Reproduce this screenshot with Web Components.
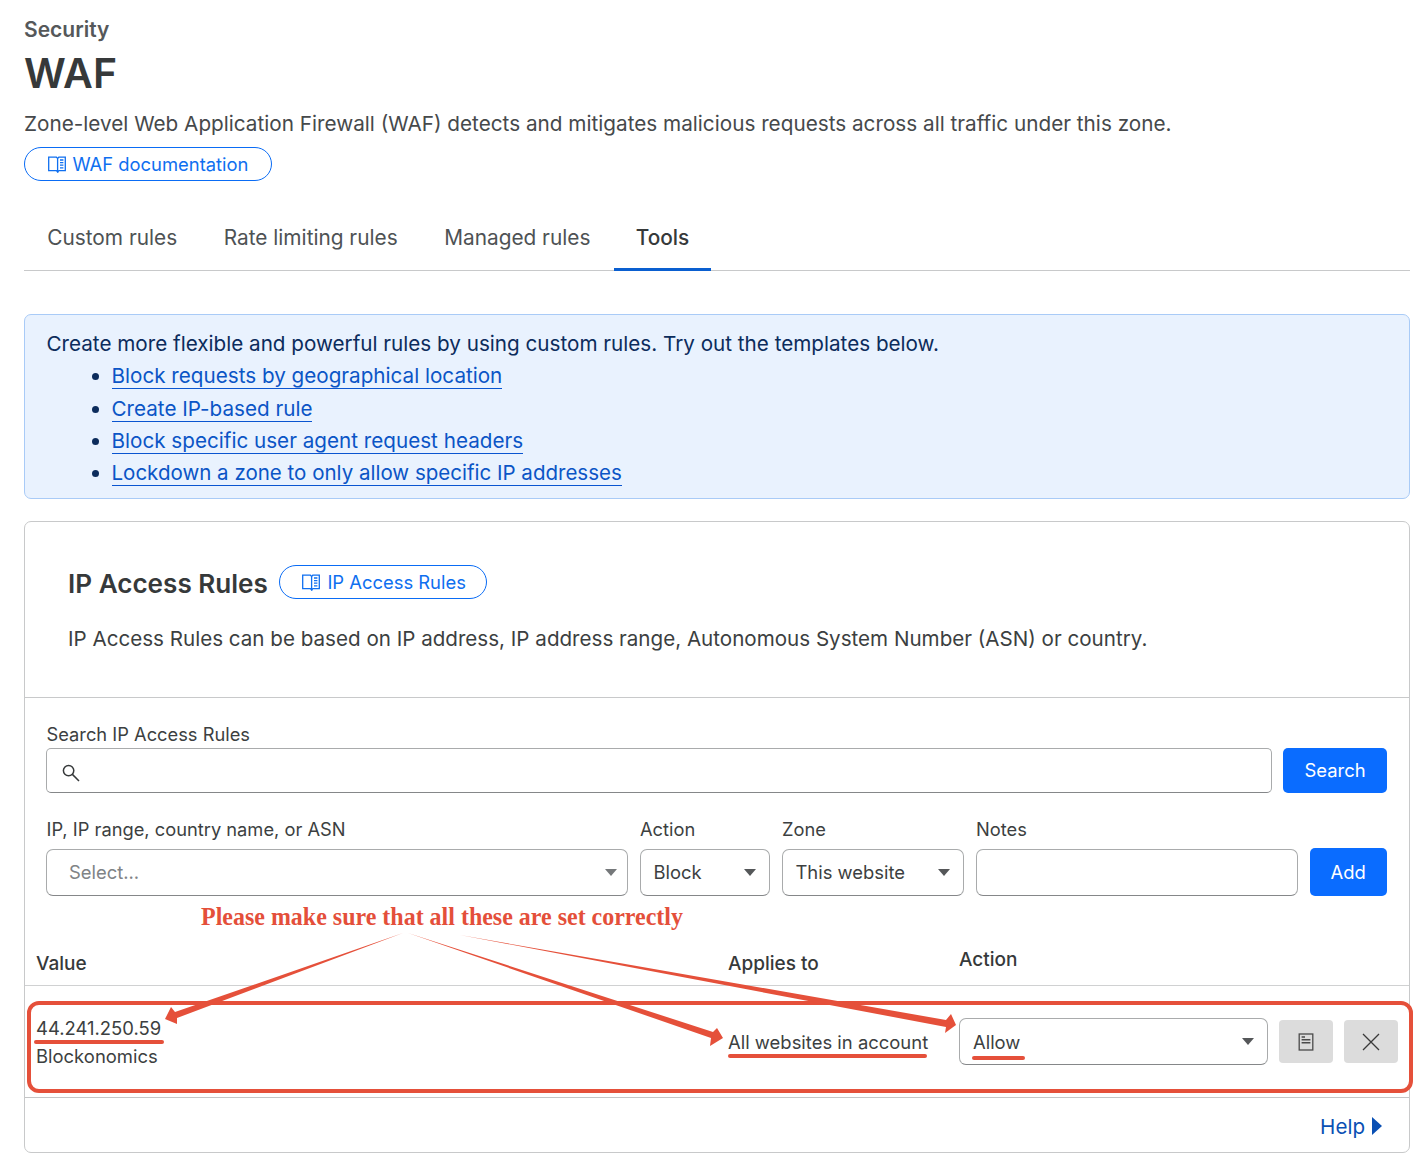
<!DOCTYPE html>
<html>
<head>
<meta charset="utf-8">
<title>WAF</title>
<style>
html, body { margin: 0; padding: 0; background: #fff; }
body { font-family: Inter, "Liberation Sans", sans-serif; color: #36393a; }
</style>
</head>
<body>
<waf-page></waf-page>

<script>
//#region ICONS
const bookIcon = /* html */ `
<svg width="18" height="17" viewBox="0 0 18 17" fill="none" stroke="currentColor" stroke-width="1.3">
	<path d="M.7 1.2h7.7l1.2 1.2V16l-1.2-1.4H.7z"/>
	<path d="M9.6 2.4l1.2-1.2h6.5v13.4h-6.5L9.6 16"/>
	<path d="M12 4h3.4M12 6.6h3.4M12 9.2h3.4M12 11.8h3.4"/>
</svg>`;
//#endregion ICONS

//#region DOC LINK
customElements.define("doc-link", class extends HTMLElement {
	constructor() {
		super();
		this.attachShadow({mode: "open"}).innerHTML = /* html */ `
		<style>
		:host {
			display: inline-flex;
			align-items: center;
			box-sizing: border-box;
			height: 34px;
			padding: 0 21px 0 22.5px;
			gap: 7px;
			border: 1.5px solid #0a6cf5;
			border-radius: 17px;
			color: #0f6ff0;
			font-size: 18.4px;
			line-height: 1;
		}
		svg { flex: none; }
		</style>
		${bookIcon}<slot></slot>`;
	}
});
//#endregion DOC LINK

//#region TABS
customElements.define("tab-bar", class extends HTMLElement {
	constructor() {
		super();
		this.attachShadow({mode: "open"}).innerHTML = /* html */ `
		<style>
		:host {
			display: flex;
			height: 70px;
			border-bottom: 1px solid #c8c9ca;
		}
		</style>
		<slot></slot>`;
	}
});

customElements.define("tab-item", class extends HTMLElement {
	constructor() {
		super();
		this.attachShadow({mode: "open"}).innerHTML = /* html */ `
		<style>
		:host {
			display: flex;
			align-items: center;
			box-sizing: border-box;
			height: 71px;
			padding: 3px 23.3px 0;
			font-size: 20.8px;
			color: #4e5254;
		}
		:host([active]) {
			color: #36393a;
			font-weight: 500;
			border-bottom: 3px solid #0a5fd0;
			padding: 6px 21.5px 0 22px;
		}
		</style>
		<slot></slot>`;
	}
});
//#endregion TABS

//#region NOTICE
customElements.define("info-banner", class extends HTMLElement {
	constructor() {
		super();
		this.attachShadow({mode: "open"}).innerHTML = /* html */ `
		<style>
		:host {
			display: block;
			box-sizing: border-box;
			height: 185px;
			margin-top: 43px;
			padding: 13px 21.5px 0;
			background: #e9f2fe;
			border: 1px solid #a9cbf7;
			border-radius: 7px;
			color: #0c2c5c;
			font-size: 20.66px;
			line-height: 32.3px;
		}
		ul { margin: 0; padding: 0 0 0 65px; }
		li:last-child { font-size: 20.52px; }
		a {
			color: #0b55c6;
			text-decoration: none;
			border-bottom: 1.5px solid #0a55d0;
		}
		</style>
		Create more flexible and powerful rules by using custom rules. Try out the templates below.
		<ul>
			<li><a>Block requests by geographical location</a></li>
			<li><a>Create IP-based rule</a></li>
			<li><a>Block specific user agent request headers</a></li>
			<li><a>Lockdown a zone to only allow specific IP addresses</a></li>
		</ul>`;
	}
});
//#endregion NOTICE

//#region FORM PARTS
customElements.define("field-box", class extends HTMLElement {
	constructor() {
		super();
		this.attachShadow({mode: "open"}).innerHTML = /* html */ `
		<style>
		:host {
			display: flex;
			flex-direction: column;
			min-width: 0;
			font-size: 18.3px;
			color: #3c3f41;
		}
		label {
			display: block;
			flex: none;
			height: var(--label-height, 27px);
			padding-left: .5px;
			line-height: 27px;
			white-space: nowrap;
		}
		::slotted(*) { flex: none; }
		</style>
		<label><slot name="label"></slot></label>
		<slot></slot>`;
	}
});

customElements.define("select-box", class extends HTMLElement {
	constructor() {
		super();
		this.attachShadow({mode: "open"}).innerHTML = /* html */ `
		<style>
		:host {
			display: flex;
			align-items: center;
			justify-content: space-between;
			box-sizing: border-box;
			height: 47px;
			padding: 0 13px;
			background: #fff;
			border: 1px solid #a9abac;
			border-bottom-color: #858789;
			border-radius: 7px;
			font-size: 18.4px;
			color: #3c3f41;
		}
		:host([placeholder]) { padding: 0 10px 0 22px; color: #808386; }
		:host([placeholder]) i { border-top-color: #75787a; }
		span { margin-top: var(--text-shift, -2px); }
		i {
			width: 0;
			height: 0;
			border-left: 6.5px solid transparent;
			border-right: 6.5px solid transparent;
			border-top: 7.5px solid #555759;
		}
		</style>
		<span><slot></slot></span><i></i>`;
	}
});

customElements.define("blue-button", class extends HTMLElement {
	constructor() {
		super();
		this.attachShadow({mode: "open"}).innerHTML = /* html */ `
		<style>
		:host {
			display: flex;
			align-items: center;
			justify-content: center;
			flex: none;
			box-sizing: border-box;
			background: #0a6cff;
			color: #fff;
			border-radius: 5px;
			font-size: 18.45px;
		}
		</style>
		<slot></slot>`;
	}
});

customElements.define("icon-button", class extends HTMLElement {
	constructor() {
		super();
		this.attachShadow({mode: "open"}).innerHTML = /* html */ `
		<style>
		:host {
			display: flex;
			align-items: center;
			justify-content: center;
			width: 54px;
			height: 43px;
			background: #dcdcdc;
			border-radius: 4px;
		}
		</style>
		<slot></slot>`;
	}
});
//#endregion FORM PARTS

//#region ANNOTATIONS
customElements.define("red-notes", class extends HTMLElement {
	constructor() {
		super();
		this.attachShadow({mode: "open"}).innerHTML = /* html */ `
		<style>
		:host {
			position: absolute;
			left: 0;
			top: 0;
			width: 1428px;
			height: 1169px;
			pointer-events: none;
		}
		svg { display: block; }
		text {
			font-family: "Liberation Serif", serif;
			font-weight: 700;
			font-size: 24.5px;
			fill: #e44f3a;
		}
		</style>
		<svg width="1428" height="1169" viewBox="0 0 1428 1169" fill="#e5503a">
			<text x="201" y="925" textLength="482" lengthAdjust="spacingAndGlyphs">Please make sure that all these are set correctly</text>
			<rect x="29" y="1003" width="1382" height="88" rx="10" fill="none" stroke="#e5503a" stroke-width="4"/>
			<!-- arrows -->
			<path d="M403 933L175 1012L171 1007L165 1019L177 1024L177 1018Z"/>
			<path d="M408 933L713 1032L717 1028L723 1038L710 1046L711 1038Z"/>
			<path d="M460 935L946 1020L951 1014L956 1025L945 1033L946 1027Z"/>
			<!-- underlines -->
			<rect x="34" y="1040" width="130" height="4" rx="2"/>
			<rect x="728" y="1054" width="199" height="4" rx="2"/>
			<rect x="972" y="1056" width="53" height="4" rx="2"/>
		</svg>`;
	}
});
//#endregion ANNOTATIONS

//#region PAGE
customElements.define("waf-page", class extends HTMLElement {
	constructor() {
		super();
		this.attachShadow({mode: "open"}).innerHTML = /* html */ `
		<style>
		:host {
			display: block;
			position: relative;
			box-sizing: border-box;
			width: 1428px;
			height: 1169px;
			padding: 0 18px 0 24px;
			overflow: hidden;
		}
		.crumb { padding-top: 17px; font-size: 21px; line-height: 26px; font-weight: 600; color: #55585a; }
		h1 { margin: 0; font-size: 41px; line-height: 50px; font-weight: 600; color: #36393a; padding-top: 5px; }
		.lead { margin-top: 13px; font-size: 20.73px; line-height: 26px; color: #46494b; }
		.lead-link { margin-top: 10px; }
		.tabs-wrap { margin-top: 19px; }
		.card {
			box-sizing: border-box;
			height: 632px;
			margin-top: 22px;
			border: 1px solid #c8c9ca;
			border-radius: 7px;
			display: flex;
			flex-direction: column;
		}
		.card-head {
			height: 176px;
			box-sizing: border-box;
			padding: 41px 43px 0;
			border-bottom: 1px solid #c8c9ca;
		}
		.title-row { display: flex; align-items: center; gap: 11px; height: 38px; }
		h2 { margin: 3px 0 0; font-size: 26.1px; font-weight: 600; color: #36393a; }
		.card-head p { margin: 25px 0 0; font-size: 20.6px; line-height: 26px; color: #3c3f41; }
		.form { padding: 23px 22px 0 21px; }
		.row { display: flex; gap: 11px; align-items: flex-end; }
		.search-input {
			display: flex;
			align-items: center;
			box-sizing: border-box;
			height: 45px;
			padding: 5px 0 0 15px;
			border: 1px solid #a9abac;
			border-bottom-color: #858789;
			border-radius: 5px;
		}
		.notes-input {
			box-sizing: border-box;
			height: 47px;
			border: 1px solid #a9abac;
			border-bottom-color: #858789;
			border-radius: 7px;
		}
		.row2 { margin-top: 23px; gap: 11.5px; --label-height: 33px; }
		.thead {
			display: flex;
			flex: none;
			height: 48px;
			margin-top: 42px;
			padding-left: 11px;
			border-bottom: 1px solid #d0d1d2;
			font-size: 19px;
			font-weight: 500;
			color: #36393a;
			box-sizing: border-box;
		}
		.thead span { line-height: 26px; }
		.tbody {
			display: flex;
			flex: none;
			height: 112px;
			box-sizing: border-box;
			padding-left: 11px;
			border-bottom: 1px solid #c4c5c6;
			font-size: 18.45px;
			line-height: 27.6px;
			color: #3c3f41;
		}
		.c1 { width: 692px; flex: none; }
		.c2 { width: 231px; flex: none; }
		.value { padding-top: 29px; }
		.applies { padding-top: 43px; }
		.actions { display: flex; align-items: flex-start; padding-top: 32px; gap: 11px; --text-shift: 3px; }
		.actions select-box { width: 309px; height: 47px; }
		.actions .btns { display: flex; gap: 10.5px; padding-top: 2px; }
		.foot {
			flex: 1;
			display: flex;
			align-items: center;
			justify-content: flex-end;
			gap: 7px;
			padding: 2px 27px 0 0;
			color: #0a50b4;
			font-size: 20.6px;
		}
		.foot i {
			width: 0;
			height: 0;
			border-top: 9px solid transparent;
			border-bottom: 9px solid transparent;
			border-left: 10px solid #0a50b4;
		}
		</style>
		<div class="crumb">Security</div>
		<h1>WAF</h1>
		<div class="lead">Zone-level Web Application Firewall (WAF) detects and mitigates malicious requests across all traffic under this zone.</div>
		<div class="lead-link"><doc-link style="padding-right:23px">WAF documentation</doc-link></div>
		<div class="tabs-wrap">
			<tab-bar>
				<tab-item>Custom rules</tab-item>
				<tab-item>Rate limiting rules</tab-item>
				<tab-item>Managed rules</tab-item>
				<tab-item active>Tools</tab-item>
			</tab-bar>
		</div>
		<info-banner></info-banner>
		<section class="card">
			<div class="card-head">
				<div class="title-row"><h2>IP Access Rules</h2><doc-link style="padding-right:20px">IP Access Rules</doc-link></div>
				<p>IP Access Rules can be based on IP address, IP address range, Autonomous System Number (ASN) or country.</p>
			</div>
			<div class="form">
				<div class="row">
					<field-box style="flex:1">
						<span slot="label">Search IP Access Rules</span>
						<div class="search-input">
							<svg width="18" height="18" viewBox="0 0 18 18" fill="none" stroke="#36393a" stroke-width="1.5"><circle cx="6.6" cy="6.6" r="5.2"/><path d="M10.4 10.4L17 17"/></svg>
						</div>
					</field-box>
					<blue-button style="width:104px;height:45px;padding-bottom:2px">Search</blue-button>
				</div>
				<div class="row row2">
					<field-box style="width:582px">
						<span slot="label">IP, IP range, country name, or ASN</span>
						<select-box placeholder>Select...</select-box>
					</field-box>
					<field-box style="width:130.5px">
						<span slot="label">Action</span>
						<select-box>Block</select-box>
					</field-box>
					<field-box style="width:182.5px">
						<span slot="label">Zone</span>
						<select-box>This website</select-box>
					</field-box>
					<field-box style="flex:1">
						<span slot="label">Notes</span>
						<div class="notes-input"></div>
					</field-box>
					<blue-button style="width:77.5px;height:48px">Add</blue-button>
				</div>
			</div>
			<div class="thead">
				<span class="c1" style="padding-top:13px">Value</span>
				<span class="c2" style="padding-top:13px">Applies to</span>
				<span style="padding-top:9px">Action</span>
			</div>
			<div class="tbody">
				<div class="c1 value">44.241.250.59<br>Blockonomics</div>
				<div class="c2 applies">All websites in account</div>
				<div class="actions">
					<select-box>Allow</select-box>
					<div class="btns">
						<icon-button>
							<svg width="16" height="18" viewBox="0 0 16 18" fill="none" stroke="#4a4a4a" stroke-width="1.3"><rect x="1.2" y="1" width="13.6" height="16"/><path d="M3.6 4h3.4M3.6 6.8h8.8M3.6 9.8h8.8" stroke-width="1.4"/></svg>
						</icon-button>
						<icon-button>
							<svg width="20" height="20" viewBox="0 0 20 20" fill="none" stroke="#3a3a3a" stroke-width="1.3"><path d="M2 2l16 16M18 2L2 18"/></svg>
						</icon-button>
					</div>
				</div>
			</div>
			<div class="foot">Help<i></i></div>
		</section>
		<red-notes></red-notes>`;
	}
});
//#endregion PAGE
</script>
</body>
</html>
